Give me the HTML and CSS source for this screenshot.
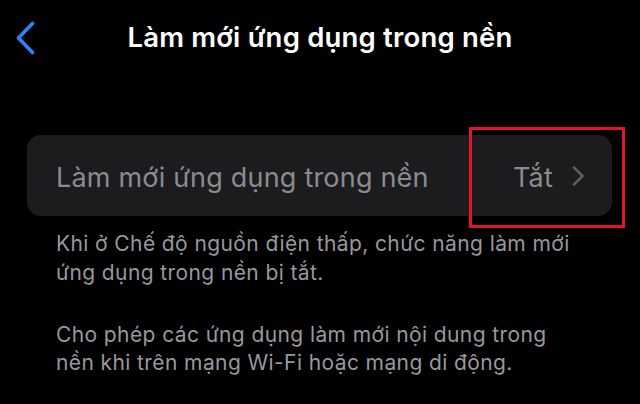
FILE: index.html
```html
<!DOCTYPE html>
<html lang="vi">
<head>
<meta charset="utf-8">
<title>Làm mới ứng dụng trong nền</title>
<link rel="stylesheet" href="styles.css">
</head>
<body>
<div class="screen">
  <header class="navbar">
    <div class="nav-left">
      <svg class="back" width="20" height="34" viewBox="0 0 20 34" aria-hidden="true">
        <path d="M17.5 2.5 L3.5 17 L17.5 31.5" fill="none" stroke="#3182f6" stroke-width="3.6" stroke-linecap="round" stroke-linejoin="round"/>
      </svg>
    </div>
    <h1 class="title">Làm mới ứng dụng trong nền</h1>
    <div class="nav-right"></div>
  </header>

  <section class="group">
    <div class="cell">
      <span class="cell-label">Làm mới ứng dụng trong nền</span>
      <span class="cell-value">Tắt</span>
      <svg class="chev" width="13" height="20" viewBox="0 0 13 20" aria-hidden="true">
        <path d="M2 1.5 L10.5 10 L2 18.5" fill="none" stroke="#5b5b60" stroke-width="2.6" stroke-linecap="round" stroke-linejoin="round"/>
      </svg>
    </div>
    <div class="highlight"></div>
  </section>

  <div class="footer">
    <p>Khi ở Chế độ nguồn điện thấp, chức năng làm mới ứng dụng trong nền bị tắt.</p>
    <p>Cho phép các ứng dụng làm mới nội dung trong nền khi trên mạng Wi-Fi hoặc mạng di động.</p>
  </div>
</div>
</body>
</html>
```
FILE: styles.css
```css
* { box-sizing: border-box; }
html, body {
  margin: 0;
  padding: 0;
  background: #000;
}
body {
  font-family: "Inter", "Noto Sans", "DejaVu Sans", sans-serif;
  color: #fff;
}
.screen {
  width: 640px;
  height: 404px;
  overflow: hidden;
  background: #000;
}
.navbar {
  display: grid;
  grid-template-columns: 1fr auto 1fr;
  align-items: center;
  height: 74px;
}
.nav-left {
  display: flex;
  align-items: center;
  padding-left: 15px;
  padding-top: 1px;
}
.back { display: block; }
.title {
  margin: 0;
  font-size: 27.5px;
  line-height: 34px;
  font-weight: 600;
  letter-spacing: 0.2px;
  color: #fff;
  white-space: nowrap;
}
.group {
  position: relative;
  margin: 61px 28px 0 27px;
}
.cell {
  display: flex;
  align-items: center;
  height: 81px;
  padding: 3px 27px 0 29px;
  background: #1c1c1e;
  border-radius: 14px;
}
.cell-label {
  flex: 1;
  font-size: 27px;
  letter-spacing: 0.2px;
  color: #8b8b90;
  white-space: nowrap;
}
.cell-value {
  font-size: 27px;
  letter-spacing: 0.2px;
  color: #8b8b90;
  margin-right: 19px;
}
.chev { display: block; margin-top: -2px; }
.highlight {
  position: absolute;
  left: 442px;
  top: -8px;
  width: 156px;
  height: 101px;
  border: 3px solid #e3142c;
}
.footer {
  width: 526px;
  margin-left: 56px;
  padding-top: 14px;
  font-size: 21px;
  line-height: 28.5px;
  letter-spacing: 0.4px;
  color: #98989d;
}
.footer p {
  margin: 0 0 33.7px;
}
```
